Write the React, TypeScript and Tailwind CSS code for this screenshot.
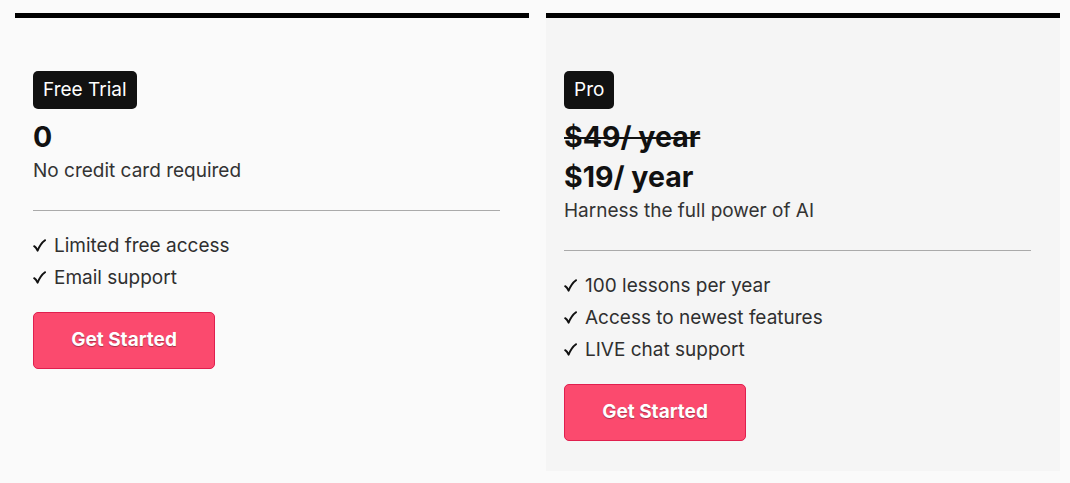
import React from "react";

function Check() {
  return (
    <svg width="13" height="13" viewBox="0 0 13 13" className="mr-[8px] shrink-0 -translate-y-[1px]" aria-hidden="true">
      <path
        d="M1.2 7.2 Q3 8.2 4.6 11.6 Q7.4 4.6 12 1.2"
        fill="none"
        stroke="#111"
        strokeWidth="2"
        strokeLinecap="round"
        strokeLinejoin="round"
      />
    </svg>
  );
}

function Feature({ text }: { text: string }) {
  return (
    <li className="flex h-[32px] items-center pt-[2px] text-[19px] leading-[30px] text-[#2f2f2f]">
      <Check />
      <span>{text}</span>
    </li>
  );
}

function Card({
  badge,
  old,
  price,
  desc,
  features,
  bg,
}: {
  badge: string;
  old?: string;
  price: string;
  desc: string;
  features: string[];
  bg: string;
}) {
  return (
    <div className={`border-t-[5px] border-black ${bg} pt-[53px] pb-[30px] pl-[18px]`}>
      <span className="inline-flex h-[38px] items-center rounded-[5px] bg-[#111] px-[10px] text-[19px] text-white">
        {badge}
      </span>
      <div className="mt-[8px]">
        {old && (
          <div className="h-[40px] text-[28.5px] font-bold leading-[40px] text-[#111] line-through decoration-[2px]">
            {old}
          </div>
        )}
        <div className="h-[40px] text-[28.5px] font-bold leading-[40px] text-[#111]">{price}</div>
      </div>
      <p className="h-[28px] text-[19px] leading-[28px] text-[#333]">{desc}</p>
      <div className="mt-[25px] h-px w-[467px] bg-[#aaa]" />
      <ul className="mt-[18px]">
        {features.map((f) => (
          <Feature key={f} text={f} />
        ))}
      </ul>
      <button className="mt-[19px] flex h-[57px] w-[182px] items-center justify-center rounded-[5px] border border-[#e01f4e] bg-[#fb4a6e] text-[19px] font-bold text-white [text-shadow:0_1px_1px_rgba(0,0,0,0.35)]">
        Get Started
      </button>
    </div>
  );
}

export default function App() {
  return (
    <div className="min-h-[483px] w-[1070px] bg-[#fafafa] pt-[13px] font-['Inter',sans-serif]">
      <div className="ml-[15px] grid w-[1045px] grid-cols-[514px_514px] gap-[17px] items-start">
        <Card
          badge="Free Trial"
          price="0"
          desc="No credit card required"
          features={["Limited free access", "Email support"]}
          bg="bg-[#fafafa]"
        />
        <Card
          badge="Pro"
          old="$49/ year"
          price="$19/ year"
          desc="Harness the full power of AI"
          features={["100 lessons per year", "Access to newest features", "LIVE chat support"]}
          bg="bg-[#f5f5f5]"
        />
      </div>
    </div>
  );
}
